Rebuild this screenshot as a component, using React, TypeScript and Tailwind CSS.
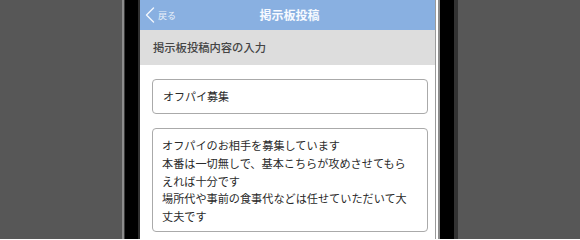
import React from "react";

const bodyLines = [
  "オフパイのお相手を募集しています",
  "本番は一切無しで、基本こちらが攻めさせてもら",
  "えれば十分です",
  "場所代や事前の食事代などは任せていただいて大",
  "丈夫です",
];

export default function App() {
  return (
    <div
      className="flex w-[580px] h-[239px] overflow-hidden bg-[#575757]"
      style={{ fontFamily: '"Noto Sans CJK JP", "Noto Sans", sans-serif' }}
    >
      {/* left bezel */}
      <div className="w-[122px] shrink-0" />
      <div className="w-[2px] shrink-0 bg-[#8c8c8c]" />
      <div className="w-[1px] shrink-0 bg-[#3a3a3a]" />
      <div className="w-[13px] shrink-0 bg-black" />
      <div className="w-[2px] shrink-0 bg-[#2f2f2f]" />

      {/* screen */}
      <div className="flex flex-col w-[295px] shrink-0 bg-white">
        {/* nav bar */}
        <div className="relative flex items-center justify-center h-[30px] bg-[#89b0e1]">
          <div className="absolute left-[5px] top-0 flex items-center h-[30px] gap-[3px]">
            <svg width="10" height="16" viewBox="0 0 10 16" fill="none">
              <polyline
                points="8.5,1 1.5,8 8.5,15"
                stroke="#f2f6fc"
                strokeWidth="1.4"
                strokeLinejoin="round"
                strokeLinecap="round"
              />
            </svg>
            <span className="text-[9px] leading-none text-[#e9f0fa]">戻る</span>
          </div>
          <span className="ml-[4px] text-[12px] font-semibold text-[#f7faff] leading-none">掲示板投稿</span>
        </div>

        {/* section header */}
        <div className="flex items-center h-[35px] pl-[13px] bg-[#dddddd]">
          <span className="text-[11.3px] text-[#444] font-medium">掲示板投稿内容の入力</span>
        </div>

        {/* form */}
        <div className="flex flex-col gap-[14px] pt-[14px] pl-[12px] pr-[7px]">
          <div className="flex items-center h-[35px] px-[10px] border border-[#aaaaaa] rounded-[4px] text-[11px] text-[#2a2a2a]">
            オフパイ募集
          </div>
          <div className="h-[104px] pt-[8px] px-[9px] border border-[#aaaaaa] rounded-[4px] text-[11.15px] leading-[17.75px] text-[#2a2a2a]">
            {bodyLines.map((line) => (
              <div key={line} className="whitespace-nowrap">
                {line}
              </div>
            ))}
          </div>
        </div>
      </div>

      {/* right bezel */}
      <div className="w-[1px] shrink-0 bg-[#9a9a9a]" />
      <div className="w-[2px] shrink-0 bg-white" />
      <div className="w-[2px] shrink-0 bg-[#8c8c8c]" />
      <div className="w-[14px] shrink-0 bg-black" />
      <div className="w-[4px] shrink-0 bg-[#333333]" />
    </div>
  );
}
